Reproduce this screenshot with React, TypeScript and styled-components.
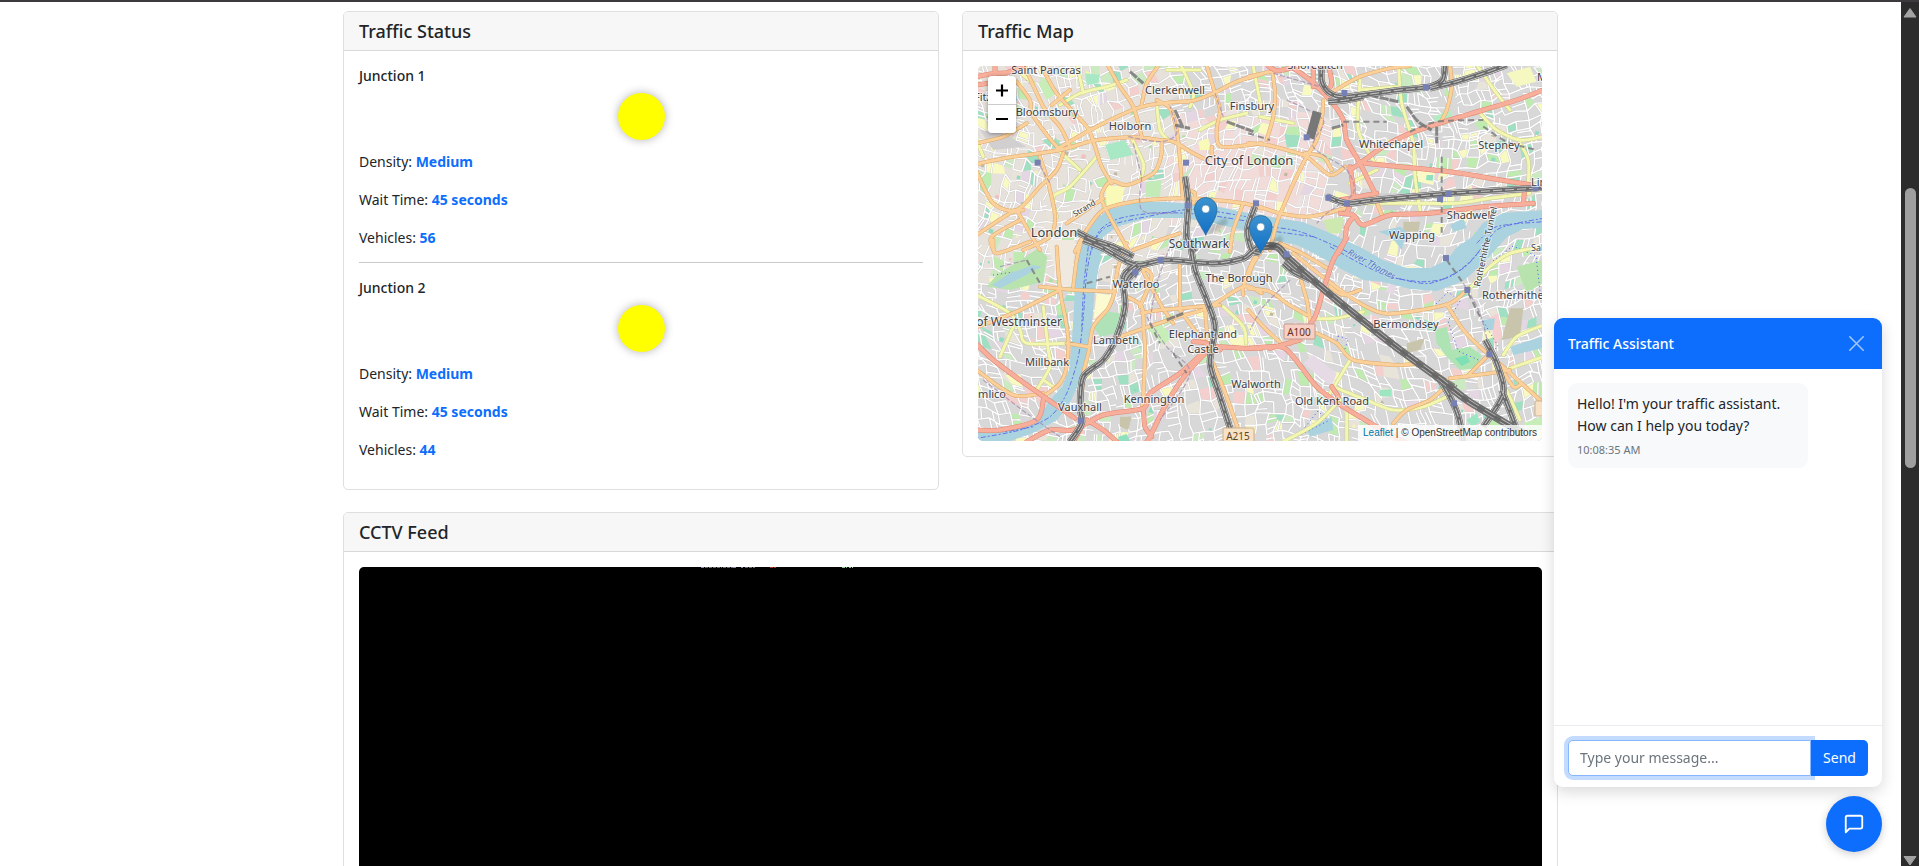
import React from "react";
import styled, { createGlobalStyle } from "styled-components";

const GlobalStyle = createGlobalStyle`
  *, *::before, *::after { box-sizing: border-box; }
  body {
    margin: 0;
    background: #fff;
    color: #212529;
    font-family: "Noto Sans", "Open Sans", sans-serif;
    font-size: 14px;
    line-height: 22px;
  }
  h1, h2, h3, p, hr, figure { margin: 0; }
  button, input { font: inherit; }
`;

/* ---------- Page frame ---------- */

const Frame = styled.div`
  display: grid;
  grid-template-columns: 1fr 18px;
  height: 100vh;
  overflow: hidden;
  border-top: 2px solid #3c3a3d;
`;

const Page = styled.main`
  min-width: 0;
  overflow: hidden;
  padding: 9px 16px 0;
`;

const Container = styled.div`
  max-width: 1215px;
  margin: 0 auto;
  display: grid;
  gap: 22px;
`;

const Columns = styled.div`
  display: grid;
  grid-template-columns: 1fr 1fr;
  align-items: start;
  gap: 23px;
`;

const ScrollTrack = styled.div`
  display: flex;
  flex-direction: column;
  align-items: center;
  justify-content: space-between;
  padding: 5px 0 0;
  background: #2c2c2c;
`;

const ScrollSpace = styled.div`
  flex: 1;
  width: 11px;
  padding-top: 170px;
`;

const ScrollThumb = styled.div`
  height: 280px;
  border-radius: 6px;
  background: #9f9f9f;
`;

/* ---------- Cards ---------- */

const CardBox = styled.section`
  min-width: 0;
  border: 1px solid #dfdfdf;
  border-radius: 5px;
  background: #fff;
`;

const CardHeader = styled.header`
  padding: 8px 15px;
  border-bottom: 1px solid #d9d9d9;
  border-radius: 4px 4px 0 0;
  background: #f7f7f7;
`;

const CardTitle = styled.h2`
  font-size: 18px;
  font-weight: 500;
  line-height: 22px;
`;

const CardBody = styled.div`
  padding: 15px;
`;

const JunctionBlock = styled.article`
  padding-bottom: 13px;
  & + & {
    border-top: 1px solid #c8c9ca;
    padding-top: 15px;
  }
`;

const JunctionName = styled.h3`
  font-size: 14px;
  font-weight: 500;
  line-height: 20px;
`;

const Light = styled.div<{ $color: string }>`
  width: 47px;
  height: 47px;
  margin: 7px auto 10px;
  border-radius: 50%;
  background: ${(p) => p.$color};
  box-shadow: 0 0 10px rgba(0, 0, 0, 0.3);
`;

const Stats = styled.div`
  display: grid;
  gap: 15px;
  line-height: 23px;
`;

const Value = styled.strong`
  color: #0d6efd;
  font-weight: 700;
`;

const Video = styled.figure`
  overflow: hidden;
  border-radius: 5px;
  background: #000;
  aspect-ratio: 16 / 9;
  svg { display: block; }
`;

/* ---------- Map ---------- */

const MapFrame = styled.div`
  position: relative;
  height: 375px;
  overflow: hidden;
  border-radius: 5px;
  background: #ddd;
`;

const MapDrawing = styled.svg`
  display: block;
  width: 100%;
  height: 100%;
`;

const ZoomControl = styled.div`
  position: absolute;
  top: 10px;
  left: 10px;
  display: grid;
  border-radius: 4px;
  box-shadow: 0 1px 4px rgba(0, 0, 0, 0.4);
`;

const ZoomButton = styled.button`
  display: grid;
  place-items: center;
  width: 28px;
  height: 28px;
  padding: 0;
  border: 0;
  background: #fff;
  color: #000;
  &:first-child {
    height: 29px;
    border-bottom: 1px solid #ccc;
    border-radius: 4px 4px 0 0;
  }
  &:last-child { border-radius: 0 0 4px 4px; }
`;

const Attribution = styled.div`
  position: absolute;
  right: 0;
  bottom: 0;
  padding: 0 5px;
  background: rgba(255, 255, 255, 0.8);
  color: #333;
  font: 10px / 16px "Liberation Sans", Arial, sans-serif;
  a { color: #0078a8; text-decoration: none; }
`;

type Pt = [number, number];
type Tile = "nw" | "ne" | "sw" | "se";

/* The map is surveyed in four tiles, three units to a pixel. */
const ORIGIN: Record<Tile, Pt> = {
  nw: [-18, -16],
  ne: [272, -16],
  sw: [-18, 174],
  se: [272, 174],
};

const parse = (s: string): Pt[] =>
  s.split(" ").map((p) => p.split(",").map(Number) as Pt);

const fromTile = (t: Tile, s: string): Pt[] =>
  parse(s).map(([x, y]) => [ORIGIN[t][0] + x / 3, ORIGIN[t][1] + y / 3]);

const smooth = (p: Pt[]) => {
  const f = (n: number) => n.toFixed(1);
  let d = `M${f(p[0][0])} ${f(p[0][1])}`;
  for (let i = 0; i < p.length - 1; i++) {
    const a = p[i - 1] ?? p[i];
    const b = p[i];
    const c = p[i + 1];
    const e = p[i + 2] ?? c;
    d += `C${f(b[0] + (c[0] - a[0]) / 7)} ${f(b[1] + (c[1] - a[1]) / 7)} ${f(c[0] - (e[0] - b[0]) / 7)} ${f(c[1] - (e[1] - b[1]) / 7)} ${f(c[0])} ${f(c[1])}`;
  }
  return d;
};

const layer = (src: Record<Tile, string[]>) =>
  (Object.keys(src) as Tile[])
    .flatMap((t) => src[t].map((s) => smooth(fromTile(t, s))))
    .join("");

const ORANGE = layer({
  nw: [
    "50,342 150,322 300,300 400,272 520,262 600,270 640,275 700,310 740,330",
    "50,280 130,260 200,220",
    "290,298 400,235 530,175 620,158 700,152 760,130 830,95 905,72",
    "170,95 210,150 215,190 265,260 300,300",
    "190,40 250,170 300,230 330,290",
    "240,40 290,130 380,230 405,290 425,350 455,400",
    "440,40 480,110 520,170 545,260",
    "545,165 560,100 600,40",
    "275,165 330,120",
    "590,150 630,175 650,240 660,330 668,440",
    "605,280 603,320 580,370 500,405 455,392 430,420 425,450 460,520 505,600",
    "738,40 765,130 780,180 770,240 785,290 905,280",
    "50,365 100,460 170,480 240,410 290,360 310,310",
    "170,480 210,550 240,600",
    "240,320 265,400 285,500 270,560 190,600",
    "50,555 150,490 190,480",
    "100,600 95,560 180,510",
    "345,605 380,540 430,480 520,455 660,445 760,450 850,460 905,475",
    "320,520 430,445",
    "685,420 705,430 700,460",
    "850,460 820,540 810,605",
    "520,600 600,570 660,550",
    "755,290 755,320",
  ],
  ne: [
    "-5,80 60,65 80,60",
    "65,50 75,130 70,200 50,270",
    "-5,280 50,285 110,300 170,320 240,375 285,350",
    "220,150 215,210 200,270 170,320 130,400 100,470 80,520 60,600",
    "240,130 330,80 420,55 480,48",
    "600,48 605,110 590,180 570,220",
    "15,465 90,490 170,500 230,490 300,470",
    "370,430 395,495",
    "165,310 220,320 245,360",
  ],
  sw: [
    "240,140 350,150 465,155",
    "290,20 300,150 315,230 325,300 320,380 300,430 250,470",
    "465,155 445,205 400,260 385,340 370,400 365,480",
    "320,310 385,320",
    "50,390 160,465 250,460",
    "50,262 170,215 300,150",
    "340,140 350,60 365,0",
    "500,10 475,80 462,155",
    "540,75 600,190 640,250",
    "500,170 545,200 552,280 555,330 550,470 545,510",
    "660,60 660,210",
    "480,290 640,235 740,205 850,140 905,160",
    "545,220 600,210 780,195",
    "660,210 720,290 760,320",
    "760,370 800,470 835,570",
    "540,200 575,110 545,80",
    "735,200 740,270",
    "905,30 880,60 850,140 850,165",
    "100,0 110,40 210,5",
  ],
  se: [
    "-5,145 60,155 110,190 170,225",
    "-5,210 50,270 100,315",
    "130,40 230,120 330,190 400,220 480,215 600,190 655,145",
    "90,10 155,40 240,90",
    "240,140 280,165 330,150",
    "150,110 170,180 180,240",
    "595,200 640,270 700,330 770,390 870,480",
    "200,280 260,310 310,360 440,375 510,375 600,430",
    "585,440 540,480 470,510 430,550",
    "600,415 720,400 780,390",
    "720,340 650,410",
    "720,340 750,380 790,440 810,435",
    "40,25 10,70 -5,110",
  ],
});

const YELLOW = layer({
  nw: [
    "300,165 360,130 440,110 500,90",
    "350,40 370,130",
    "590,160 600,240 625,270",
    "415,315 330,410 280,440 290,500",
    "660,40 700,130 690,170",
    "300,305 360,360",
    "515,265 550,340 545,380",
    "50,270 70,320",
    "720,240 780,210 860,190",
    "620,60 720,60",
    "170,60 220,100",
  ],
  ne: [
    "10,50 35,180",
    "445,40 455,160 490,280 495,380 510,480",
    "330,90 325,240 375,340",
    "690,190 740,240 810,270 880,260",
    "810,280 835,330 835,400",
    "300,400 380,360",
    "320,460 500,460 620,460 720,445 840,430",
    "330,120 450,110",
    "680,45 740,130 780,180",
    "30,200 130,220",
  ],
  sw: [
    "50,165 150,220 180,270 200,310 320,310",
    "250,200 265,330 270,380 230,450",
    "790,200 850,260 858,310",
    "160,260 120,350",
    "280,440 250,420",
  ],
  se: [
    "180,235 260,235 340,215",
    "760,345 800,290 880,255",
    "655,150 720,80 780,40 880,20",
    "100,605 200,550 270,480",
    "240,460 270,410 300,360",
    "250,440 350,480 430,510 520,500 590,470",
    "290,500 290,605",
    "770,450 810,540",
    "780,385 880,350",
  ],
});

const RED = layer({
  nw: ["50,80 105,70 140,68 190,48", "105,45 105,110", "50,105 120,95"],
  ne: [
    "120,48 180,90 240,150 280,210 290,270 330,340 375,430",
    "190,45 190,110",
    "235,45 245,100 225,130",
    "55,48 80,62 120,55",
    "880,120 800,150 700,180 600,210 480,250 400,290 330,340 300,360",
    "345,340 450,350 600,365 720,385 845,405",
    "300,350 310,430 290,490",
    "380,430 270,450",
    "270,490 310,495 340,525 420,495 540,490 700,470 850,460",
    "825,405 820,460",
    "310,500 290,530 285,570 265,610",
  ],
  sw: [
    "50,312 100,360 180,420 280,490 345,535",
    "50,570 120,570 230,540 250,480",
    "200,605 270,570 340,570 430,525 550,505 570,460 660,400 740,330 770,320 850,325 905,325",
    "745,330 680,400 620,490 570,590 560,605",
    "550,505 555,560 575,590",
    "380,540 430,570 470,605",
    "365,560 340,605",
    "700,305 740,310 780,330",
  ],
  se: [
    "290,-5 250,60 220,150 190,240 120,310",
    "-5,325 90,320 130,350 200,440 280,500 380,560 470,610",
    "60,325 150,300",
    "245,440 265,470",
  ],
});

const RAIL = layer({
  nw: [
    "675,380 685,460 680,560 705,605",
    "350,545 400,570 460,590 520,620",
    "885,470 862,540 875,600 900,610",
  ],
  ne: [
    "215,45 215,95 240,130 290,140 450,120 540,110 578,90 585,45",
    "235,155 290,150 340,140",
    "540,115 620,95 700,70 770,45",
    "230,440 290,460 380,450 600,430 850,415 880,412",
  ],
  sw: [
    "370,0 430,25 500,65 540,75 620,60 760,70 850,55 880,30 905,15",
    "530,70 490,110 495,200 470,290 430,360 370,410 360,500 365,550 330,605",
    "690,0 705,90 740,180 765,260 750,370 780,470 812,570",
    "540,80 510,110 490,150",
  ],
  se: [
    "-5,45 30,20 80,20 110,50 160,95 260,180 360,260 450,330 560,410 650,480 750,540 820,580",
    "100,70 130,95 180,120",
    "565,410 600,470 625,530 640,605",
    "705,300 740,370 760,460 700,560",
    "755,450 790,540 800,570",
  ],
});

const RAIL_MAIN = layer({
  nw: [],
  ne: [],
  sw: [],
  se: ["20,20 80,20 110,50 160,95 260,180 360,260 450,330 560,410 650,480 750,540 820,580"],
});

const YARDS = layer({
  nw: ["510,65 550,100", "645,180 670,235", "800,215 880,245", "645,225 690,235"],
  ne: ["470,170 505,215 545,240", "330,130 445,155", "245,235 280,225", "560,230 560,280"],
  sw: ["620,240 670,220", "490,90 530,110"],
  se: ["400,285 440,320", "540,390 620,440", "670,490 730,530"],
});

const SIDINGS = layer({
  nw: [],
  ne: ["280,215 410,215", "480,245 560,215 700,210", "700,230 770,275 860,300", "-5,250 60,270", "575,320 575,560"],
  sw: ["200,60 240,130", "380,130 450,110", "570,250 600,310", "640,340 680,400"],
  se: ["655,160 690,230", "590,60 640,130"],
});

const TERMINUS = layer({
  nw: [],
  ne: ["202,185 180,265"],
  sw: [],
  se: [],
});

const TUBE = layer({
  nw: ["505,260 600,275 650,250 630,170", "545,380 545,480 640,490", "520,280 545,380", "230,330 270,400", "765,130 790,200", "80,200 160,240"],
  ne: ["110,150 220,210 190,290 290,360 310,430 230,490 200,520", "70,70 210,110"],
  sw: ["560,230 620,320 690,400 600,540", "630,20 590,130 570,240", "120,80 200,60", "70,420 200,520 300,590"],
  se: ["640,130 690,220 720,340", "120,120 40,200 0,270"],
});

const FERRY = layer({
  nw: ["395,600 420,540 480,505 600,488 740,495 870,515", "400,580 440,530 560,500 700,478 860,500"],
  ne: ["60,530 150,545 260,590 300,610", "80,545 190,560", "700,590 740,540 800,520 880,505", "680,580 740,530 880,515"],
  sw: ["400,0 380,100 370,230 355,350 320,460 270,530 180,570 50,595", "385,20 372,130 365,260", "50,565 130,575 220,560"],
  se: ["240,20 330,70 420,110 520,125 600,110 670,55 710,0", "440,115 540,130 640,85 690,30"],
});

const RIVER =
  "M0,366 42,361 62,349 72,334 84,321 91,304 94,274 97,224 99,194 104,174 110,165 119,152 132,143 162,136 189,136 215,138 242,141 265,146 299,152 325,156 352,167 382,181 405,194 429,202 452,202 469,194 479,181 494,171 505,157 525,147 564,144 564,162 545,163 529,171 519,182 505,198 485,215 459,225 432,223 405,216 385,214 365,204 339,189 319,179 295,174 265,164 235,157 205,152 170,152 152,157 139,161 125,171 122,194 117,224 114,257 110,281 107,301 99,321 92,337 79,354 55,367 32,375 0,375Z";

/* City blocks: a warped grid of small parcels, the gaps being side streets. */
const buildBlocks = () => {
  let seed = 77;
  const rnd = () => {
    seed = (seed * 1664525 + 1013904223) % 4294967296;
    return seed / 4294967296;
  };
  const step = 10;
  const cols = 66;
  const rows = 48;
  const grid: Pt[][] = [];
  for (let r = 0; r <= rows; r++) {
    const line: Pt[] = [];
    for (let c = 0; c <= cols; c++) {
      const x = c * step - 40;
      const y = r * step - 50;
      line.push([
        x + Math.sin(y / 47) * 15 + Math.sin(x / 31 + y / 60) * 5 + (rnd() - 0.5) * 6,
        y + Math.sin(x / 58) * 17 + Math.cos(y / 29) * 4 + (rnd() - 0.5) * 6,
      ]);
    }
    grid.push(line);
  }
  const fills: Record<string, string> = {};
  let streets = "";
  const f = (p: Pt) => `${p[0].toFixed(1)} ${p[1].toFixed(1)}`;
  const mid = (a: Pt, b: Pt, t: number): Pt => [a[0] + (b[0] - a[0]) * t, a[1] + (b[1] - a[1]) * t];
  for (let r = 0; r < rows; r++) {
    for (let c = 0; c < cols; c++) {
      const a = grid[r][c];
      const b = grid[r][c + 1];
      const d = grid[r + 1][c + 1];
      const e = grid[r + 1][c];
      const inCity = a[0] > 190 && a[0] < 345 && a[1] > 45 && a[1] < 150;
      const inWest = a[0] < 190 && a[1] < 210;
      const k = rnd();
      let color = inCity ? (k < 0.6 ? "#f2dcd9" : "#ece2e2") : inWest ? "#e6e1db" : "#d9d8d8";
      if (k > 0.97) color = "#9fe0c3";
      else if (k > 0.93) color = "#bfeab0";
      else if (k > 0.87) color = "#f9f9c2";
      else if (k > 0.82) color = "#f3d0ce";
      else if (k > 0.78) color = "#cbeac2";
      else if (k > 0.75) color = "#e4d6e2";
      else if (k > 0.7) color = "#e9e4da";
      fills[color] = (fills[color] ?? "") + `M${f(a)}L${f(b)}L${f(d)}L${f(e)}Z`;
      if (rnd() < 0.68) streets += `M${f(a)}L${f(b)}`;
      if (rnd() < 0.68) streets += `M${f(a)}L${f(e)}`;
      if (rnd() < 0.34) {
        const t = 0.3 + rnd() * 0.4;
        streets += rnd() < 0.5 ? `M${f(mid(a, b, t))}L${f(mid(e, d, t))}` : `M${f(mid(a, e, t))}L${f(mid(b, d, t))}`;
      }
      if (rnd() < 0.16) {
        const q = mid(a, d, 0.3 + rnd() * 0.4);
        const s = 1.5 + rnd() * 3;
        const spot = ["#8fdcc0", "#f7f7a8", "#c0b7a2", "#aee3a4", "#efc2c0"][Math.floor(rnd() * 5)];
        fills[spot] = (fills[spot] ?? "") + `M${f(q)}l${s.toFixed(1)} ${(s / 3).toFixed(1)}l${(-s / 3).toFixed(1)} ${s.toFixed(1)}l${(-s).toFixed(1)} ${(-s / 3).toFixed(1)}Z`;
      }
    }
  }
  return { fills, streets };
};

const BLOCKS = buildBlocks();

const AREAS: [Tile, string, string][] = [
  ["sw", "#b9e3ae", "80,140 110,105 235,25 262,50 250,125 150,150"],
  ["sw", "#aad3df", "95,135 150,100 220,75 245,80 180,115 120,145"],
  ["sw", "#efe9e0", "260,0 345,0 335,140 300,140"],
  ["sw", "#b0e2b8", "400,260 445,215 480,220 470,280 420,290"],
  ["sw", "#fcfad0", "410,160 455,165 445,200 400,240"],
  ["sw", "#c8eeb8", "560,265 600,250 640,290 610,315"],
  ["sw", "#8fe0bf", "475,590 500,582 512,605 475,605"],
  ["sw", "#c9c4ac", "480,530 515,530 505,570 480,560"],
  ["nw", "#a9e8c4", "435,285 495,270 520,315 450,330"],
  ["nw", "#c8eeb8", "235,100 265,85 290,130 260,150"],
  ["nw", "#a9e8c4", "375,70 420,75 415,100 380,105"],
  ["nw", "#ece5df", "265,205 310,180 340,225 290,255"],
  ["nw", "#fafab8", "715,275 745,265 755,300 720,300"],
  ["nw", "#fafab8", "435,405 495,410 480,470 440,470"],
  ["nw", "#c2ebb8", "560,395 605,390 600,440 555,440"],
  ["nw", "#d2cfd0", "60,240 130,250 200,290 100,300"],
  ["ne", "#f5f8c0", "770,70 840,50 860,95 800,110"],
  ["ne", "#b3ecc2", "550,200 600,180 610,215 560,230"],
  ["ne", "#fbf9c6", "500,350 555,370 550,405 505,395"],
  ["ne", "#8fe0bf", "530,375 550,375 548,392 528,390"],
  ["ne", "#cde9b0", "220,510 280,500 275,550 235,550"],
  ["ne", "#c9c4ac", "460,515 510,515 505,545 460,545"],
  ["ne", "#aad3df", "385,545 450,530 470,545 455,600 425,560"],
  ["ne", "#aad3df", "600,525 640,505 650,535 610,545"],
  ["ne", "#cfcfd4", "380,430 460,430 450,480 400,480"],
  ["se", "#aee3b4", "555,270 590,260 605,330 660,320 695,345 680,385 630,390 590,350 560,310"],
  ["se", "#7fdfb5", "615,355 650,345 660,365 635,378"],
  ["se", "#c9c4ac", "780,205 820,205 810,290 755,300"],
  ["se", "#f6d0d0", "720,230 745,220 755,290 735,320"],
  ["se", "#aad3df", "695,240 735,235 730,270 705,270"],
  ["se", "#aad3df", "780,320 876,290 876,325 790,345"],
  ["se", "#e6dbe4", "160,370 190,345 260,400 245,440"],
  ["se", "#c9c4ac", "470,310 525,295 510,330 470,340"],
  ["se", "#9ce6c1", "390,450 425,448 425,470 390,468"],
  ["se", "#9ce6c1", "650,540 680,520 690,545 665,560"],
  ["se", "#aad3df", "170,570 245,530 250,570 180,590"],
  ["se", "#c8eeb8", "820,550 876,530 876,570 840,575"],
  ["se", "#e6dbe4", "420,130 440,135 430,165 405,155"],
  ["se", "#b9e3ae", "800,80 876,60 876,130 830,160"],
];

const STATIONS: [Tile, number, number][] = [
  ["nw", 233, 338], ["nw", 678, 338], ["nw", 683, 466], ["nw", 888, 460],
  ["ne", 283, 129], ["ne", 528, 112], ["ne", 170, 262], ["ne", 235, 443],
  ["ne", 291, 460], ["ne", 596, 432], ["ne", 570, 447], ["ne", 857, 414],
  ["sw", 526, 97], ["sw", 602, 60], ["sw", 362, 542],
  ["se", 110, 43], ["se", 588, 54], ["se", 652, 150], ["se", 718, 343], ["se", 612, 490],
];

const LABELS: [string, number, number, ("start" | "middle" | "end")?, number?][] = [
  ["Saint Pancras", 68, 8], ["Fitzrovia", -4, 35, "start"], ["Bloomsbury", 69, 50],
  ["Clerkenwell", 197, 28], ["Finsbury", 274, 44], ["Holborn", 152, 64],
  ["City of London", 271, 99, "middle", 13], ["London", 76, 171, "middle", 13],
  ["Southwark", 221, 182, "middle", 12], ["Whitechapel", 413, 82], ["Stepney", 521, 83],
  ["Shoreditch", 337, 3], ["Shadwell", 492, 153], ["Wapping", 434, 173],
  ["Limehouse", 553, 120, "start"], ["Waterloo", 158, 222], ["The Borough", 261, 216],
  ["City of Westminster", 84, 260, "end", 12], ["Lambeth", 138, 278],
  ["Elephant and", 225, 272], ["Castle", 225, 287], ["Millbank", 69, 300],
  ["Pimlico", 28, 332, "end"], ["Vauxhall", 102, 345], ["Kennington", 176, 337],
  ["Walworth", 278, 322], ["Bermondsey", 428, 262], ["Old Kent Road", 354, 339],
  ["Rotherhithe", 504, 233, "start"], ["Mile End", 559, 15, "start"],
];

const PIN = "M11.7 38.4C10.8 34.2 .4 22.4 .4 12.2A11.3 11.7 0 0 1 23 12.2C23 22.4 12.6 34.2 11.7 38.4Z";

const Road = ({ d, fill, casing, width }: { d: string; fill: string; casing: string; width: number }) => (
  <g fill="none" strokeLinecap="round" strokeLinejoin="round">
    <path d={d} stroke={casing} strokeWidth={width + 1} />
    <path d={d} stroke={fill} strokeWidth={width} />
  </g>
);

const Shield = ({ x, y, text, red }: { x: number; y: number; text: string; red?: boolean }) => (
  <g>
    <rect x={x - 15} y={y - 8} width="31" height="15" rx="1" fill={red ? "#f6d0c4" : "#f7e2c6"} stroke={red ? "#c99a8e" : "#cdb08a"} />
    <text x={x} y={y + 4} textAnchor="middle" fontSize="10" fill={red ? "#6b2c20" : "#5e4420"}>{text}</text>
  </g>
);

const Pin = ({ x, y }: { x: number; y: number }) => (
  <g transform={`translate(${x - 12} ${y - 38})`}>
    <path d="M12 38L22 26L32 20L34 26L24 34Z" fill="#000" opacity=".16" filter="url(#soft)" />
    <path d={PIN} fill="url(#pinFill)" stroke="#2e6c97" strokeWidth=".8" />
    <circle cx="11.7" cy="12" r="4" fill="#fff" stroke="#2e6c97" strokeWidth=".5" />
  </g>
);

const LondonMap = () => (
  <MapDrawing viewBox="0 0 564 375" preserveAspectRatio="xMidYMid slice" role="img" aria-label="Map of central London">
    <defs>
      <linearGradient id="pinFill" x1="0" y1="0" x2="0" y2="1">
        <stop offset="0" stopColor="#3c93cf" />
        <stop offset="1" stopColor="#126fc6" />
      </linearGradient>
      <filter id="soft"><feGaussianBlur stdDeviation="1.4" /></filter>
    </defs>
    <rect width="564" height="375" fill="#e0dfdf" />
    {Object.entries(BLOCKS.fills).map(([c, d]) => <path key={c} d={d} fill={c} />)}
    <path d={BLOCKS.streets} fill="none" stroke="#c6c3c3" strokeWidth="2" />
    <path d={BLOCKS.streets} fill="none" stroke="#fff" strokeWidth="1.4" />
    {AREAS.map(([t, c, s], i) => (
      <polygon key={i} points={fromTile(t, s).map((p) => p.join(",")).join(" ")} fill={c} />
    ))}
    <path d={RIVER} fill="#aad3df" />
    <path d={FERRY} fill="none" stroke="#5a68e8" strokeWidth=".9" strokeDasharray="5 2 2 2" />
    <g fill="none" stroke="#4a5cf0" strokeWidth="1" strokeDasharray="1 3">
      <path d="M458 238L470 226L482 235L470 255L480 285L505 296L520 280L505 255M515 195L535 180L558 190L562 225M340 345L320 370L350 355ZM360 270l10 3l-3 10l-9-3ZM15 209L35 206" />
    </g>
    <Road d={YELLOW} fill="#f3f7b2" casing="#c9cf86" width={3} />
    <Road d={ORANGE} fill="#fbd19b" casing="#dfa668" width={3} />
    <Road d={RED} fill="#f7ae9a" casing="#dc8672" width={4} />
    <path d={TUBE} fill="none" stroke="#a58fb0" strokeWidth="1.2" strokeDasharray="5 2" opacity=".8" />
    <path d={SIDINGS} fill="none" stroke="#7d7d7d" strokeWidth="2" strokeDasharray="6 4" opacity=".85" />
    <path d={YARDS} fill="none" stroke="#777" strokeWidth="3" strokeDasharray="9 1" opacity=".85" />
    <path d={TERMINUS} fill="none" stroke="#777" strokeWidth="9" />
    <g fill="none">
      <path d={RAIL} stroke="#5c5c5c" strokeWidth="6.5" />
      <path d={RAIL} stroke="#d6d6d6" strokeWidth="5.5" />
      <path d={RAIL} stroke="#6b6b6b" strokeWidth="4.2" />
      <path d={RAIL} stroke="#c9c9c9" strokeWidth="1" strokeDasharray="9 3" />
      <path d={RAIL_MAIN} stroke="#707070" strokeWidth="7.5" />
      <path d={RAIL_MAIN} stroke="#bdbdbd" strokeWidth="4" strokeDasharray="12 7" />
      <path d={RAIL_MAIN} stroke="#666" strokeWidth="2.6" />
    </g>
    {STATIONS.map(([t, x, y], i) => (
      <rect key={i} x={ORIGIN[t][0] + x / 3 - 3} y={ORIGIN[t][1] + y / 3 - 3} width="6" height="6" fill="#7780b4" />
    ))}
    <g fontFamily="'Noto Sans', sans-serif" fill="#3f3f45" stroke="#fff" strokeOpacity=".65" strokeWidth="2" strokeLinejoin="round" paintOrder="stroke">
      {LABELS.map(([text, x, y, anchor = "middle", size = 11]) => (
        <text key={text} x={x} y={y} textAnchor={anchor} fontSize={size}>{text}</text>
      ))}
      <text transform="translate(97 151) rotate(-31)" fontSize="8">Strand</text>
      <text transform="translate(502 221) rotate(-78)" fontSize="9">Rotherhithe Tunnel</text>
      <text x="553" y="185" fontSize="9">Salter Road</text>
      <text transform="translate(369 188) rotate(29)" fontSize="9" fontStyle="italic" fill="#5b78c4" strokeOpacity=".2">River Thames</text>
    </g>
    <Shield x={321} y={266} text="A100" red />
    <Shield x={260} y={370} text="A215" />
    <Shield x={572} y={343} text="A2" />
    <Pin x={228} y={169} />
    <Pin x={283} y={187} />
  </MapDrawing>
);

/* ---------- Chat ---------- */

const ChatPanel = styled.aside`
  position: fixed;
  right: 37px;
  bottom: 79px;
  display: flex;
  flex-direction: column;
  width: 328px;
  height: 469px;
  border-radius: 9px;
  background: #fff;
  box-shadow: 0 5px 15px rgba(0, 0, 0, 0.15);
`;

const ChatHeader = styled.header`
  display: flex;
  align-items: center;
  justify-content: space-between;
  height: 51px;
  padding: 0 14px;
  border-radius: 9px 9px 0 0;
  background: #0d6efd;
  color: #fff;
`;

const ChatTitle = styled.h2`
  font-size: 14px;
  font-weight: 500;
  line-height: 18px;
`;

const CloseButton = styled.button`
  display: flex;
  padding: 4px;
  border: 0;
  background: none;
  color: #fff;
  opacity: 0.6;
`;

const Messages = styled.div`
  flex: 1;
  padding: 14px;
`;

const Bubble = styled.div`
  width: 80%;
  padding: 10px 9px 9px;
  border-radius: 9px;
  background: #f8f9fa;
`;

const Time = styled.time`
  display: block;
  padding-top: 4px;
  color: #6c757d;
  font-size: 11px;
  line-height: 18px;
`;

const ChatForm = styled.form`
  display: flex;
  padding: 14px 14px 11px;
  border-top: 1px solid #e9ecef;
`;

const ChatInput = styled.input`
  flex: 1;
  min-width: 0;
  height: 36px;
  padding: 0 11px 2px;
  border: 1px solid #86b7fe;
  border-radius: 5px 0 0 5px;
  outline: 0;
  background: #fff;
  color: #212529;
  box-shadow: 0 0 0 4px rgba(13, 110, 253, 0.25);
  &::placeholder { color: #6c757d; opacity: 1; }
`;

const SendButton = styled.button`
  position: relative;
  width: 57px;
  height: 36px;
  padding: 0;
  border: 0;
  border-radius: 0 5px 5px 0;
  background: #0d6efd;
  color: #fff;
`;

const ChatToggle = styled.button`
  position: fixed;
  right: 37px;
  bottom: 14px;
  display: grid;
  place-items: center;
  width: 56px;
  height: 56px;
  padding: 0;
  border: 0;
  border-radius: 50%;
  background: #0d6efd;
  color: #fff;
  box-shadow: 0 2px 9px rgba(0, 0, 0, 0.2);
`;

/* ---------- Composition ---------- */

const junctions = [
  { name: "Junction 1", density: "Medium", wait: 45, vehicles: 56 },
  { name: "Junction 2", density: "Medium", wait: 45, vehicles: 44 },
];

const Card = ({ title, children }: { title: string; children: React.ReactNode }) => (
  <CardBox>
    <CardHeader><CardTitle>{title}</CardTitle></CardHeader>
    <CardBody>{children}</CardBody>
  </CardBox>
);

const CameraOverlay = () => (
  <svg width="520" height="1" aria-hidden="true" shapeRendering="crispEdges">
    <path d="M342 .5H363M364 .5H376M386 .5H396" stroke="#6d6d74" strokeDasharray="3 1" />
    <path d="M342 .5h3M350 .5h1M374 .5h3M382 .5h2" stroke="#9a7fb0" />
    <path d="M411 .5h3M415 .5h2" stroke="#a33" />
    <path d="M483 .5h2M487 .5h1M490 .5h2" stroke="#7fd07f" />
    <path d="M485 .5h1M493 .5h1" stroke="#bbb" />
  </svg>
);

export default function App() {
  return (
    <>
      <GlobalStyle />
      <Frame>
        <Page>
          <Container>
            <Columns>
              <Card title="Traffic Status">
                {junctions.map((j) => (
                  <JunctionBlock key={j.name}>
                    <JunctionName>{j.name}</JunctionName>
                    <Light $color="#ffff00" />
                    <Stats>
                      <p>Density: <Value>{j.density}</Value></p>
                      <p>Wait Time: <Value>{j.wait} seconds</Value></p>
                      <p>Vehicles: <Value>{j.vehicles}</Value></p>
                    </Stats>
                  </JunctionBlock>
                ))}
              </Card>
              <Card title="Traffic Map">
                <MapFrame>
                  <LondonMap />
                  <ZoomControl>
                    <ZoomButton type="button" aria-label="Zoom in">
                      <svg width="14" height="14"><path d="M1 7.5H13M7 1.5V13.5" stroke="#000" strokeWidth="2.2" /></svg>
                    </ZoomButton>
                    <ZoomButton type="button" aria-label="Zoom out">
                      <svg width="14" height="14"><path d="M1 7H13" stroke="#000" strokeWidth="2" /></svg>
                    </ZoomButton>
                  </ZoomControl>
                  <Attribution>
                    <a href="#leaflet">Leaflet</a> | © OpenStreetMap contributors
                  </Attribution>
                </MapFrame>
              </Card>
            </Columns>
            <Card title="CCTV Feed">
              <Video><CameraOverlay /></Video>
            </Card>
          </Container>
        </Page>
        <ScrollTrack aria-hidden="true">
          <svg width="14" height="11"><path d="M7 1.5L13 10H1Z" fill="#a3a3a3" stroke="#a3a3a3" strokeLinejoin="round" /></svg>
          <ScrollSpace><ScrollThumb /></ScrollSpace>
          <svg width="14" height="11"><path d="M7 10L13 1.5H1Z" fill="#a3a3a3" stroke="#a3a3a3" strokeLinejoin="round" /></svg>
        </ScrollTrack>
      </Frame>
      <ChatPanel aria-label="Traffic Assistant">
        <ChatHeader>
          <ChatTitle>Traffic Assistant</ChatTitle>
          <CloseButton type="button" aria-label="Close">
            <svg width="15" height="15" viewBox="0 0 15 15"><path d="M.8 .8L14.2 14.2M14.2 .8L.8 14.2" stroke="currentColor" strokeWidth="1.6" strokeLinecap="round" /></svg>
          </CloseButton>
        </ChatHeader>
        <Messages>
          <Bubble>
            <p>Hello! I'm your traffic assistant. How can I help you today?</p>
            <Time>10:08:35 AM</Time>
          </Bubble>
        </Messages>
        <ChatForm onSubmit={(e) => e.preventDefault()}>
          <ChatInput type="text" aria-label="Message" placeholder="Type your message..." />
          <SendButton type="submit">Send</SendButton>
        </ChatForm>
      </ChatPanel>
      <ChatToggle type="button" aria-label="Toggle chat">
        <svg width="22" height="22" viewBox="0 0 24 24" fill="none" stroke="currentColor" strokeWidth="2" strokeLinecap="round" strokeLinejoin="round">
          <path d="M21 15a2 2 0 0 1-2 2H7l-4 4V5a2 2 0 0 1 2-2h14a2 2 0 0 1 2 2z" />
        </svg>
      </ChatToggle>
    </>
  );
}
